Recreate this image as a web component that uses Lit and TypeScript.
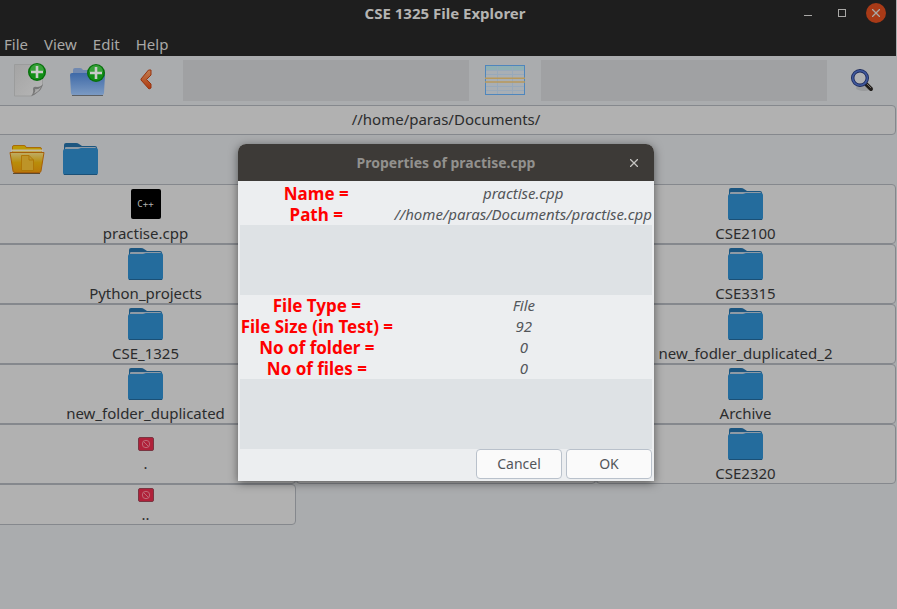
import { LitElement, html, css, svg, nothing } from "lit";
import { customElement, property } from "lit/decorators.js";

type Kind = "folder" | "cpp" | "unknown" | "";
interface Entry {
  kind: Kind;
  name: string;
}

const folder = html`<svg width="35" height="34" viewBox="0 0 35 34" aria-hidden="true">
  <path d="M1 8V3Q1 1 3 1H13Q15 1 16 2L19 4H32Q34 4 34 6V10H1Z" fill="#1c5680" />
  <rect x="2" y="5" width="31" height="4" rx="1" fill="#8e9aa5" />
  <path d="M0 9Q0 7 2 7H15L18 6H33Q35 6 35 8V31Q35 33 33 33H2Q0 33 0 31Z" fill="#246c9d" />
  <path d="M1 32.5H34" stroke="#1a5077" />
</svg>`;

const badge = svg`
  <circle cx="0" cy="0" r="9" fill="#07700c" />
  <circle cx="0" cy="0" r="7.6" fill="#129017" />
  <path d="M-7 -1A7 7 0 0 1 7 -1Q0 2 -7 -1Z" fill="#4fae4e" opacity=".6" />
  <path d="M-6 0H6M0 -6V6" stroke="#c9cbc9" stroke-width="2.6" />`;

const newFile = html`<svg width="34" height="36" viewBox="0 0 34 36" aria-hidden="true">
  <defs>
    <linearGradient id="sheet" x1="0" y1="0" x2="1" y2="1">
      <stop offset="0" stop-color="#a4a4a4" /><stop offset="1" stop-color="#b6b6b6" />
    </linearGradient>
  </defs>
  <path d="M1.500 2.500H29.500V23L19 34H1.500Z" fill="url(#sheet)" stroke="#9b9c9c" />
  <path d="M18 34Q21 31 20 27Q20 24 24 25Q28 25 30 22Q29 27 25 30Q22 33 18 34Z" fill="#777" />
  <path d="M20 32Q23 30 22 27Q25 28 28 25Q26 30 20 32Z" fill="#aaa" />
  <g transform="translate(24 10)">${badge}</g>
</svg>`;

const newFolder = html`<svg width="36" height="34" viewBox="0 0 36 34" aria-hidden="true">
  <defs>
    <linearGradient id="blue" x1="0" y1="0" x2="0" y2="1">
      <stop offset="0" stop-color="#3e69a7" /><stop offset="1" stop-color="#7b9ac3" />
    </linearGradient>
  </defs>
  <path d="M3 12V7Q3 5 5 5H10Q12 5 13 7H32V12Z" fill="#7189b0" />
  <path d="M0 12Q0 10 2 10H33Q35 10 35 12L34 30Q34 32 32 32H3Q1 32 1 30Z" fill="url(#blue)" />
  <path d="M2 32.500H33" stroke="#5d6064" />
  <g transform="translate(26 10)">${badge}</g>
</svg>`;

const back = html`<svg width="12" height="21" viewBox="0 0 12 21" aria-hidden="true">
  <defs>
    <linearGradient id="rust" x1="0" y1="0" x2="0" y2="1">
      <stop offset="0" stop-color="#c17c4e" /><stop offset="1" stop-color="#ae3a10" />
    </linearGradient>
  </defs>
  <path d="M8.500 1H11V6L6.500 10.500L11 15V19L9 20L1 11V10Z" fill="url(#rust)" stroke="#97330f" />
</svg>`;

const table = html`<svg width="40" height="30" viewBox="0 0 40 30" aria-hidden="true">
  <rect width="40" height="30" fill="#a9afb4" />
  <rect x="1" y="1" width="38" height="4" fill="#8fb0b4" />
  <path d="M1 5.500H39M1 9.500H39M1 21.500H39M1 25.500H39M12.500 1V29M27.500 1V29" stroke="#98a9ba" />
  <rect x=".5" y=".5" width="39" height="29" fill="none" stroke="#4e86bd" />
  <path d="M0 13.300H40M0 17H40" stroke="#b9995a" stroke-width="1.600" />
</svg>`;

const search = html`<svg width="23" height="23" viewBox="0 0 23 23" aria-hidden="true">
  <ellipse cx="13" cy="19" rx="8" ry="3" fill="#8d8f91" opacity=".6" />
  <path d="M14 14L20 20" stroke="#201d1b" stroke-width="4" stroke-linecap="round" />
  <path d="M15 14L20 19" stroke="#77706a" stroke-width="1" />
  <circle cx="9" cy="9" r="7.300" fill="#b0b1b3" stroke="#1c2a5c" stroke-width="3.400" />
  <circle cx="9" cy="9" r="7.300" fill="none" stroke="#40599d" stroke-width="1.600" />
</svg>`;

const openFolder = html`<svg width="36" height="30" viewBox="0 0 36 30" aria-hidden="true">
  <defs>
    <linearGradient id="gold" x1="0" y1="0" x2="0" y2="1">
      <stop offset="0" stop-color="#beae6a" /><stop offset=".5" stop-color="#b98d0a" />
      <stop offset="1" stop-color="#b8780a" />
    </linearGradient>
  </defs>
  <path d="M3.500 9V3Q3.500 1.500 5 1.500H15Q17 1.500 17 3.500H31Q32.500 3.500 32.500 5V9Z" fill="#bd9a05" stroke="#a96a08" />
  <path d="M2 6.500H34" stroke="#c2bba2" stroke-width="2" />
  <path d="M1 8.500H35L32 27Q32 28.500 30 28.500H6Q4 28.500 4 27Z" fill="url(#gold)" stroke="#a75f09" />
  <path d="M12.500 11.500H20L24.500 16V26.500H12.500ZM20 11.500V16H24.500" fill="#bd9428" stroke="#b07707" />
  <path d="M4 29.500H31" stroke="#5e4a2e" />
</svg>`;

const unknown = html`<svg width="16" height="14" viewBox="0 0 16 14" aria-hidden="true">
  <rect x=".5" y=".5" width="15" height="13" rx="1.500" fill="#b0213a" stroke="#793642" />
  <circle cx="8" cy="7" r="3.700" fill="none" stroke="#c06a78" />
  <path d="M5.500 4.500L10.500 9.500" stroke="#c06a78" />
</svg>`;

@customElement("file-entry")
export class FileEntry extends LitElement {
  @property({ attribute: false }) entry: Entry = { kind: "", name: "" };

  static styles = css`
    :host {
      display: flex;
    }
    .cell {
      flex: 1;
      min-width: 0;
      display: flex;
      flex-direction: column;
      align-items: center;
      justify-content: center;
      gap: 3px;
      padding: 1px 1px 0 0;
      box-sizing: border-box;
      border: 1px solid #85888d;
      border-radius: 4px;
      background: #b1b1b1;
      color: #2b2c2d;
      font: 15px/18px "Noto Sans", sans-serif;
    }
    .cpp {
      width: 30px;
      height: 30px;
      margin: 2px 0;
      display: grid;
      place-items: center;
      border-radius: 2px;
      background: #000;
      color: #b1b1b1;
      font: 9px/10px "DejaVu Sans Mono", monospace;
    }
  `;

  private icon() {
    switch (this.entry.kind) {
      case "folder":
        return folder;
      case "cpp":
        return html`<span class="cpp">C++</span>`;
      case "unknown":
        return unknown;
      default:
        return nothing;
    }
  }

  render() {
    return html`<button class="cell">${this.icon()}<span>${this.entry.name}</span></button>`;
  }
}

@customElement("properties-dialog")
export class PropertiesDialog extends LitElement {
  static styles = css`
    .dialog {
      position: static;
      width: 416px;
      max-width: 100%;
      box-sizing: border-box;
      margin: 0;
      padding: 0;
      border: 0;
      border-radius: 8px 8px 0 0;
      background: #eceef0;
      box-shadow: 0 2px 10px rgba(0, 0, 0, 0.5);
    }
    .head {
      display: grid;
      grid-template-columns: 40px 1fr 40px;
      align-items: center;
      height: 37px;
      border-radius: 8px 8px 0 0;
      background: #3d3a37;
      color: #92918e;
    }
    .title {
      grid-column: 2;
      margin: 0;
      text-align: center;
      font: bold 14px/20px "Noto Sans", sans-serif;
    }
    .close {
      display: grid;
      place-items: center;
      height: 24px;
      padding: 0;
      border: 0;
      background: none;
      color: #c5c4c1;
    }
    .body {
      padding: 2px;
    }
    .rows {
      display: grid;
      grid-template-columns: 3fr 5fr;
      column-gap: 2px;
      margin: 0;
      text-align: center;
      white-space: nowrap;
      line-height: 21px;
    }
    .rows dt {
      color: #ff0000;
      font-weight: bold;
      font-size: 17px;
      display: flex;
      justify-content: center;
    }
    .rows dd {
      margin: 0;
      color: #53565a;
      font-style: italic;
      font-size: 15px;
      display: flex;
      justify-content: center;
    }
    .spacer {
      height: 70px;
      background: #dee2e5;
    }
    .actions {
      display: flex;
      justify-content: flex-end;
      gap: 4px;
    }
    .action {
      width: 86px;
      height: 30px;
      padding: 0;
      border: 1px solid #b9c1cb;
      border-radius: 4px;
      background: #fafafa;
      color: #53565a;
      font: 14px/18px "Noto Sans", sans-serif;
    }
    .dialog,
    .rows {
      font-family: "Noto Sans", sans-serif;
    }
  `;

  private rows(items: [string, string][]) {
    return html`<dl class="rows">
      ${items.map(([k, v]) => html`<dt>${k} =</dt><dd>${v}</dd>`)}
    </dl>`;
  }

  render() {
    return html`<dialog open class="dialog" aria-labelledby="title">
      <header class="head">
        <h2 class="title" id="title">Properties of practise.cpp</h2>
        <button class="close" aria-label="Close">
          <svg width="8" height="8" viewBox="0 0 8 8"><path d="M0 0L8 8M8 0L0 8" stroke="currentColor" stroke-width="1.300" /></svg>
        </button>
      </header>
      <div class="body">
        ${this.rows([
          ["Name", "practise.cpp"],
          ["Path", "//home/paras/Documents/practise.cpp"],
        ])}
        <div class="spacer"></div>
        ${this.rows([
          ["File Type", "File"],
          ["File Size (in Test)", "92"],
          ["No of folder", "0"],
          ["No of files", "0"],
        ])}
        <div class="spacer"></div>
        <div class="actions">
          <button class="action">Cancel</button>
          <button class="action">OK</button>
        </div>
      </div>
    </dialog>`;
  }
}

@customElement("app-root")
export class AppRoot extends LitElement {
  private entries: Entry[] = [
    { kind: "cpp", name: "practise.cpp" },
    { kind: "", name: "" },
    { kind: "folder", name: "CSE2100" },
    { kind: "folder", name: "Python_projects" },
    { kind: "", name: "" },
    { kind: "folder", name: "CSE3315" },
    { kind: "folder", name: "CSE_1325" },
    { kind: "", name: "" },
    { kind: "folder", name: "new_fodler_duplicated_2" },
    { kind: "folder", name: "new_folder_duplicated" },
    { kind: "", name: "" },
    { kind: "folder", name: "Archive" },
    { kind: "unknown", name: "." },
    { kind: "", name: "" },
    { kind: "folder", name: "CSE2320" },
    { kind: "unknown", name: ".." },
  ];

  static styles = css`
    :host {
      display: block;
      position: relative;
      min-height: 100vh;
      overflow: hidden;
      background: #aaacae;
      color: #2b2c2d;
      font: 15px/20px "Noto Sans", sans-serif;
    }
    button {
      padding: 0;
      border: 0;
      background: none;
      color: inherit;
      font: inherit;
    }
    .top {
      margin-right: 1px;
      background: #1e1e1e;
      color: #a9a8a6;
    }
    .titlebar {
      display: grid;
      grid-template-columns: 1fr auto 1fr;
      align-items: center;
      height: 26px;
      padding: 0 10px 0 4px;
    }
    .title {
      grid-column: 2;
      margin: 0;
      color: #b5b4b2;
      font: bold 15px/20px "Noto Sans", sans-serif;
    }
    .controls {
      display: flex;
      justify-content: flex-end;
      align-items: center;
      gap: 14px;
    }
    .control {
      display: grid;
      place-items: center;
      width: 20px;
      height: 20px;
      border-radius: 50%;
    }
    .quit {
      background: #a83a17;
    }
    .menu {
      display: flex;
      align-items: center;
      gap: 16px;
      height: 30px;
      padding: 6px 4px 0;
      box-sizing: border-box;
    }
    .toolbar {
      display: flex;
      align-items: center;
      height: 49px;
    }
    .tool {
      flex: none;
      display: grid;
      place-items: center;
      width: 58px;
      height: 41px;
      padding: 0 0 2px 2px;
    }
    .wide {
      width: 72px;
      padding-left: 0;
    }
    .end {
      width: 70px;
      padding: 0;
    }
    .fill {
      flex: 1;
      height: 41px;
      background: #a0a1a3;
    }
    .lead {
      margin-left: 9px;
    }
    .path {
      display: block;
      width: calc(100% + 3px);
      height: 30px;
      margin-left: -4px;
      padding: 0 0 2px;
      box-sizing: border-box;
      border: 1px solid #85888d;
      border-radius: 4px;
      background: #b1b1b1;
      color: #2b2c2d;
      font: inherit;
      text-align: center;
    }
    .places {
      display: flex;
      align-items: center;
      gap: 18px;
      height: 49px;
      padding: 0 0 2px 9px;
      box-sizing: border-box;
    }
    .place {
      display: grid;
      place-items: center;
    }
    .grid {
      display: grid;
      grid-template-columns: repeat(3, 1fr);
      grid-template-rows: repeat(5, 60px) 41px;
      margin: 0 1px 0 -4px;
    }
    .overlay {
      position: absolute;
      inset: 16px 5px 0 0;
      display: grid;
      place-items: center;
    }
  `;

  render() {
    return html`
      <header class="top">
        <div class="titlebar">
          <h1 class="title">CSE 1325 File Explorer</h1>
          <div class="controls">
            <button class="control" aria-label="Minimize">
              <svg width="8" height="8" viewBox="0 0 8 8"><path d="M0 6.500H8" stroke="currentColor" /></svg>
            </button>
            <button class="control" aria-label="Maximize">
              <svg width="8" height="8" viewBox="0 0 8 8"><rect x=".5" y=".5" width="7" height="7" fill="none" stroke="currentColor" /></svg>
            </button>
            <button class="control quit" aria-label="Close">
              <svg width="8" height="8" viewBox="0 0 8 8"><path d="M0 0L8 8M8 0L0 8" stroke="currentColor" stroke-width="1.300" /></svg>
            </button>
          </div>
        </div>
        <nav class="menu">
          ${["File", "View", "Edit", "Help"].map((m) => html`<button>${m}</button>`)}
        </nav>
      </header>
      <div class="toolbar">
        <button class="tool" aria-label="New file">${newFile}</button>
        <button class="tool" aria-label="New folder">${newFolder}</button>
        <button class="tool" aria-label="Back">${back}</button>
        <div class="fill lead"></div>
        <button class="tool wide" aria-label="Table view">${table}</button>
        <div class="fill"></div>
        <button class="tool end" aria-label="Search">${search}</button>
      </div>
      <input class="path" aria-label="Path" value="//home/paras/Documents/" />
      <div class="places">
        <button class="place" aria-label="Documents">${openFolder}</button>
        <button class="place" aria-label="Folder">${folder}</button>
      </div>
      <main class="grid">
        ${this.entries.map((e) => html`<file-entry .entry=${e}></file-entry>`)}
      </main>
      <div class="overlay"><properties-dialog></properties-dialog></div>
    `;
  }
}
